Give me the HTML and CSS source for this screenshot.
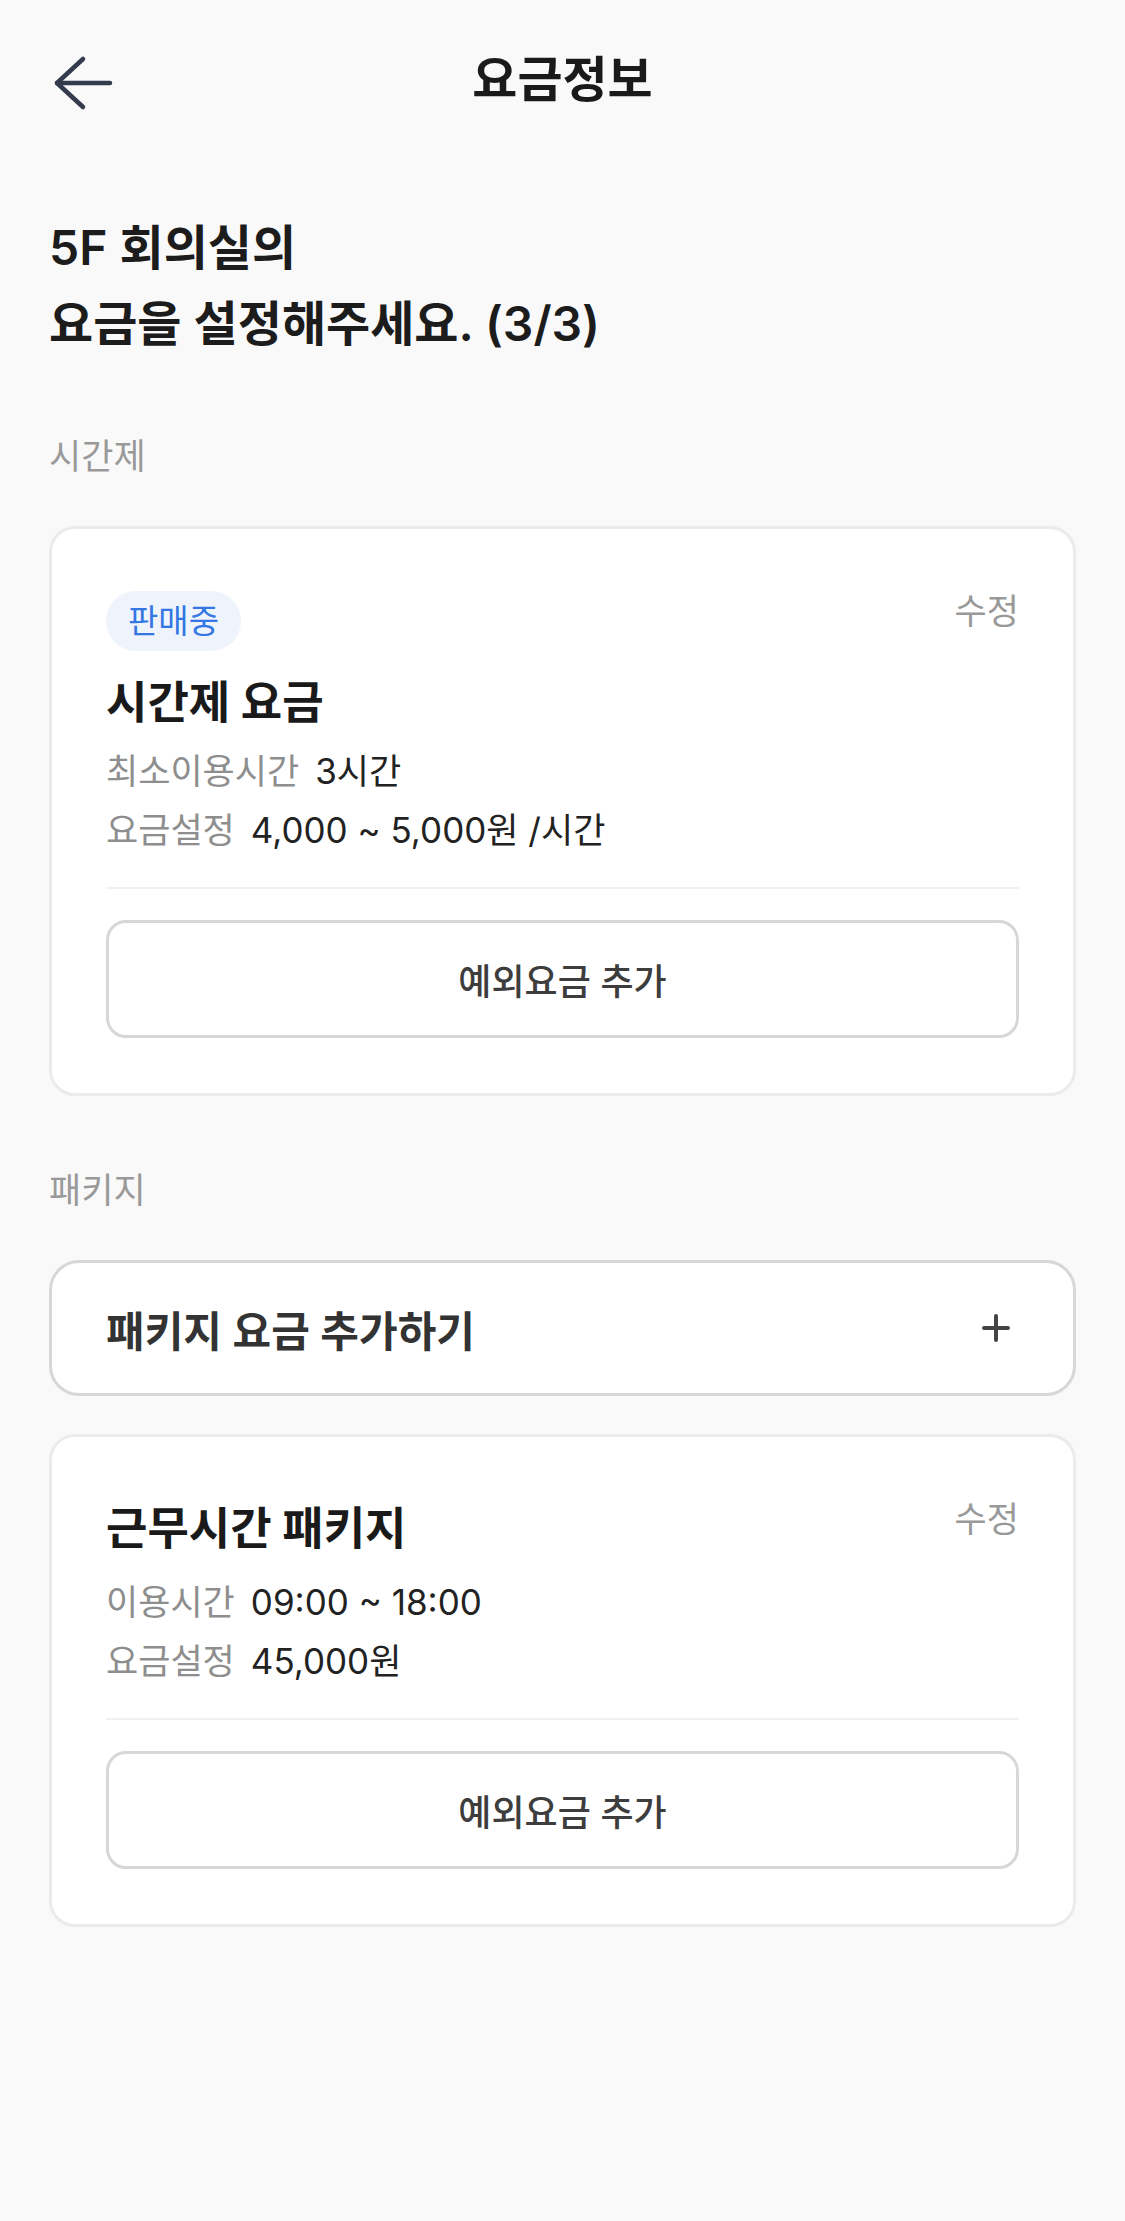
FILE: index.html
```html
<!DOCTYPE html>
<html lang="ko">
<head>
  <meta charset="UTF-8">
  <meta name="viewport" content="width=device-width, initial-scale=1.0">
  <title>요금정보</title>
  <link rel="stylesheet" href="styles.css">
</head>
<body>
<header class="topbar">
  <a class="back-btn" href="#" aria-label="뒤로">
    <svg width="70" height="70" viewBox="0 0 70 70" fill="none" stroke="#333b4d" stroke-width="4.5" stroke-linecap="round" stroke-linejoin="round">
      <path d="M65 38H12"/>
      <path d="M38 14L12 38L38 62"/>
    </svg>
  </a>
  <h1 class="topbar-title">요금정보</h1>
  <span></span>
</header>

<main class="content">
  <h2 class="intro">5F 회의실의<br>요금을 설정해주세요. (3/3)</h2>

  <p class="section-label">시간제</p>
  <section class="fee-card">
    <div class="card-top">
      <span class="badge">판매중</span>
      <a class="edit-link" href="#">수정</a>
    </div>
    <h3 class="card-title with-badge">시간제 요금</h3>
    <dl class="info-rows">
      <div class="info-row"><dt>최소이용시간</dt><dd>3시간</dd></div>
      <div class="info-row"><dt>요금설정</dt><dd>4,000 ~ 5,000원 /시간</dd></div>
    </dl>
    <hr class="divider">
    <button class="outline-btn">예외요금 추가</button>
  </section>

  <p class="section-label">패키지</p>
  <button class="add-package">
    <span>패키지 요금 추가하기</span>
    <svg width="28" height="28" viewBox="0 0 28 28" fill="none" stroke="#444" stroke-width="4" stroke-linecap="round">
      <path d="M14 2V26M2 14H26"/>
    </svg>
  </button>

  <section class="fee-card">
    <div class="card-top">
      <h3 class="card-title">근무시간 패키지</h3>
      <a class="edit-link" href="#">수정</a>
    </div>
    <dl class="info-rows">
      <div class="info-row"><dt>이용시간</dt><dd>09:00 ~ 18:00</dd></div>
      <div class="info-row"><dt>요금설정</dt><dd>45,000원</dd></div>
    </dl>
    <hr class="divider">
    <button class="outline-btn">예외요금 추가</button>
  </section>
</main>
</body>
</html>
```

FILE: styles.css
```css
:root {
  --bg-color: #f9f9f9;
  --text-color: #1f1f1f;
  --muted-color: #999;
  --line-color: #ebebeb;
  --btn-line: #d7d7d7;
  --blue: #3477e3;
}
* { box-sizing: border-box; }
body { margin: 0; background-color: var(--bg-color); color: var(--text-color); font-family: Inter, "Noto Sans CJK KR", sans-serif; }

.topbar { height: 160px; display: grid; grid-template-columns: 1fr auto 1fr; align-items: center; padding: 0 45px; }
.back-btn { display: flex; width: 70px; height: 70px; }
.topbar-title { margin: 0; font-size: 49px; font-weight: 700; line-height: 60px; color: #1a1a1a; }

.content { padding: 0 49px 60px; }
.intro { margin: 50px 0 0; font-size: 48px; font-weight: 600; line-height: 76px; color: #1c1c1c; }

.section-label { margin: 70px 0 46px; font-size: 35px; line-height: 48px; color: var(--muted-color); }

.fee-card { background: #fff; border: 3px solid var(--line-color); border-radius: 26px; padding: 62px 54px 55px; margin-bottom: 38px; }
.card-top { display: flex; justify-content: space-between; align-items: flex-start; }
.badge { display: inline-block; height: 60px; line-height: 60px; padding: 0 22px; border-radius: 30px; background: #eff4fc; color: var(--blue); font-size: 33px; }
.edit-link { font-size: 35px; line-height: 40px; color: var(--muted-color); text-decoration: none; }
.card-title { margin: 0; font-size: 45px; font-weight: 700; line-height: 60px; color: #1a1a1a; }
.card-title.with-badge { margin-top: 22px; }

.info-rows { margin: 9px 0 0; }
.card-top + .info-rows { margin-top: 14px; }
.info-row { display: flex; gap: 16px; font-size: 35px; line-height: 59px; }
.info-row dt { color: #8e8e8e; }
.info-row dd { margin: 0; color: #222; }

.divider { margin: 27px 0 0; border: none; height: 2px; background: #f1f1f1; }
.outline-btn { display: block; width: 100%; height: 118px; margin-top: 31px; background: #fff; border: 3px solid var(--btn-line); border-radius: 20px; font-family: inherit; font-size: 36px; font-weight: 500; color: #3d3d3d; }

.add-package { display: flex; justify-content: space-between; align-items: center; width: 100%; height: 136px; padding: 0 63px 0 54px; margin-bottom: 38px; background: #fff; border: 3px solid var(--btn-line); border-radius: 30px; font-family: inherit; font-size: 42px; font-weight: 600; color: #333; }
```
